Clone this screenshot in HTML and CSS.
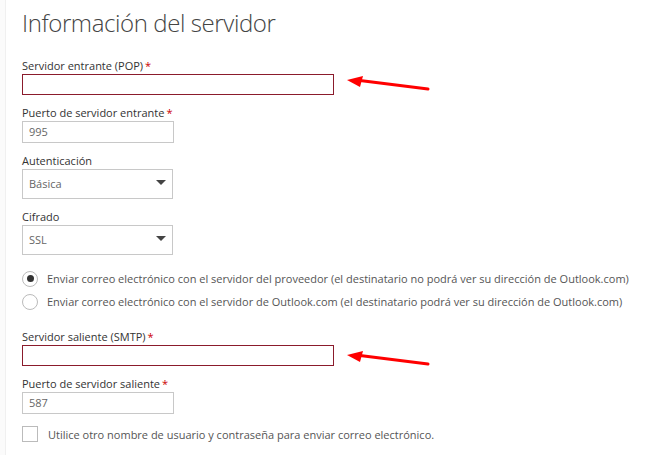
FILE: index.html
```html
<!DOCTYPE html>
<html lang="es">
<head>
<meta charset="utf-8">
<title>Información del servidor</title>
<link rel="stylesheet" href="styles.css">
</head>
<body>
<div class="page">
  <div class="edge"></div>
  <main class="form">
    <h1 class="title">Información del servidor</h1>

    <div class="field f-first">
      <label class="label">Servidor entrante (POP)<span class="req">*</span></label>
      <div class="input wide invalid"></div>
    </div>

    <div class="field">
      <label class="label">Puerto de servidor entrante<span class="req">*</span></label>
      <div class="input narrow">995</div>
    </div>

    <div class="field">
      <label class="label">Autenticación</label>
      <div class="select">Básica<span class="caret"></span></div>
    </div>

    <div class="field">
      <label class="label">Cifrado</label>
      <div class="select">SSL<span class="caret"></span></div>
    </div>

    <div class="radios">
      <div class="radio-row"><span class="radio checked"></span><span class="opt">Enviar correo electrónico con el servidor del proveedor (el destinatario no podrá ver su dirección de Outlook.com)</span></div>
      <div class="radio-row"><span class="radio"></span><span class="opt">Enviar correo electrónico con el servidor de Outlook.com (el destinatario podrá ver su dirección de Outlook.com)</span></div>
    </div>

    <div class="field f-smtp">
      <label class="label">Servidor saliente (SMTP)<span class="req">*</span></label>
      <div class="input wide invalid"></div>
    </div>

    <div class="field">
      <label class="label">Puerto de servidor saliente<span class="req">*</span></label>
      <div class="input narrow">587</div>
    </div>

    <div class="check-row"><span class="checkbox"></span><span class="opt">Utilice otro nombre de usuario y contraseña para enviar correo electrónico.</span></div>
  </main>

  <svg class="arrow arrow-1" width="90" height="20" viewBox="0 0 90 20">
    <line x1="82" y1="13" x2="10" y2="4" stroke="#f00" stroke-width="3" stroke-linecap="round"/>
    <polygon points="0,3 16,-1 13,10" fill="#f00" transform="translate(1,1)"/>
  </svg>
  <svg class="arrow arrow-2" width="90" height="20" viewBox="0 0 90 20">
    <line x1="82" y1="13" x2="10" y2="4" stroke="#f00" stroke-width="3" stroke-linecap="round"/>
    <polygon points="0,3 16,-1 13,10" fill="#f00" transform="translate(1,1)"/>
  </svg>
</div>
</body>
</html>
```

FILE: styles.css
```css
html, body {
  margin: 0;
  padding: 0;
  background: #fff;
}

.page {
  position: relative;
  width: 647px;
  height: 455px;
  overflow: hidden;
  font-family: "Open Sans", "Noto Sans", sans-serif;
  color: #333;
}

.edge {
  position: absolute;
  left: 0;
  top: 0;
  width: 5px;
  height: 455px;
  border-right: 1px solid #f0f0f0;
  background: #fbfbfb;
}

.form {
  padding: 8px 0 0 22px;
}

.title {
  margin: 0;
  font-size: 24px;
  font-weight: 300;
  line-height: 30px;
  color: #444;
  letter-spacing: -0.4px;
}

.field {
  margin-top: 10px;
}

.f-first {
  margin-top: 20px;
}

.f-smtp {
  margin-top: 16px;
}

.label {
  display: block;
  font-size: 11px;
  line-height: 16px;
  color: #333;
}

.req {
  color: #c00;
  margin-left: 2px;
}

.input {
  box-sizing: border-box;
  height: 22px;
  border: 1px solid #c8c8c8;
  font-size: 11px;
  line-height: 20px;
  padding-left: 6px;
  color: #666;
}

.wide {
  width: 312px;
}

.narrow {
  width: 152px;
}

.invalid {
  border-color: #8b1b2c;
  height: 21px;
}

.select {
  box-sizing: border-box;
  width: 151px;
  height: 30px;
  border: 1px solid #c8c8c8;
  font-size: 11px;
  line-height: 28px;
  padding-left: 6px;
  color: #666;
  display: flex;
  justify-content: space-between;
  align-items: center;
}

.caret {
  width: 0;
  height: 0;
  margin-right: 6px;
  margin-top: -4px;
  border-left: 5px solid transparent;
  border-right: 5px solid transparent;
  border-top: 5px solid #444;
}

.radios {
  margin-top: 12px;
}

.radio-row {
  display: flex;
  align-items: center;
  height: 23px;
}

.radio {
  box-sizing: border-box;
  width: 16px;
  height: 16px;
  border: 1px solid #bbb;
  border-radius: 50%;
  display: flex;
  align-items: center;
  justify-content: center;
  flex: none;
}

.radio.checked::after {
  content: "";
  width: 7px;
  height: 7px;
  border-radius: 50%;
  background: #333;
}

.opt {
  margin-left: 9px;
  font-size: 11px;
  color: #555;
  white-space: nowrap;
}

.check-row {
  display: flex;
  align-items: center;
  margin-top: 12px;
}

.checkbox {
  box-sizing: border-box;
  width: 16px;
  height: 16px;
  border: 1px solid #bbb;
  flex: none;
}

.check-row .opt {
  margin-left: 10px;
}

.arrow {
  position: absolute;
  overflow: visible;
}

.arrow-1 {
  left: 346px;
  top: 76px;
}

.arrow-2 {
  left: 346px;
  top: 351px;
}
```
